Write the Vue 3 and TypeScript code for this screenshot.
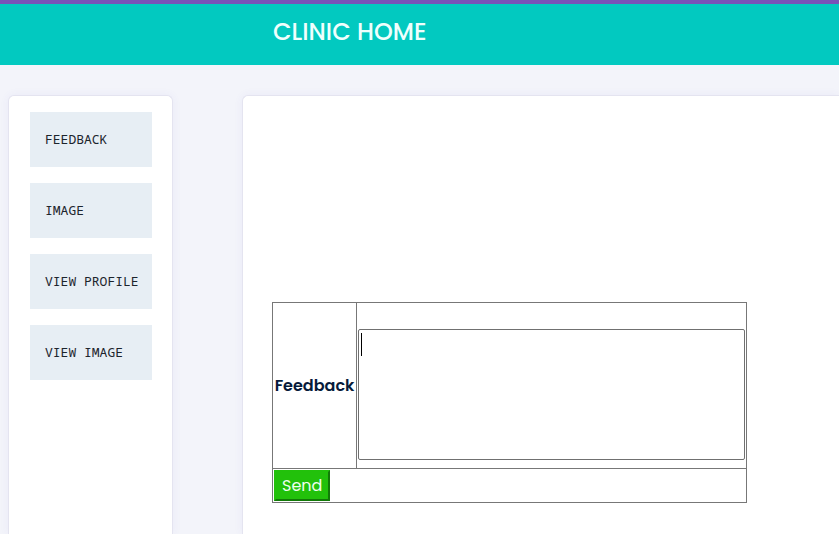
<script setup lang="ts">
import { ref } from 'vue'

interface MenuItem {
  label: string
  href: string
}

const menu: MenuItem[] = [
  { label: 'FEEDBACK', href: '#feedback' },
  { label: 'IMAGE', href: '#image' },
  { label: 'VIEW PROFILE', href: '#view-profile' },
  { label: 'VIEW IMAGE', href: '#view-image' },
]

const feedback = ref<string>('')

function send(): void {
  feedback.value = ''
}
</script>

<template>
  <div class="page">
    <header class="header">
      <h1 class="title">CLINIC HOME</h1>
    </header>
    <div class="body">
      <nav class="card sidebar">
        <a v-for="item in menu" :key="item.label" class="menu-link" :href="item.href">{{ item.label }}</a>
      </nav>
      <main class="card content">
        <form @submit.prevent="send">
          <table class="form-table">
            <tbody>
              <tr>
                <th scope="row"><label for="feedback">Feedback</label></th>
                <td class="field-cell">
                  <div class="field">
                    <textarea id="feedback" v-model="feedback"></textarea>
                    <span v-if="!feedback" class="caret" aria-hidden="true"></span>
                  </div>
                </td>
              </tr>
              <tr>
                <td colspan="2"><button class="send" type="submit">Send</button></td>
              </tr>
            </tbody>
          </table>
        </form>
      </main>
    </div>
  </div>
</template>

<style>
body {
  margin: 0;
  background: #f3f4fa;
}
</style>

<style scoped>
.page {
  display: flex;
  flex-direction: column;
  min-height: 100vh;
  box-sizing: border-box;
  color: #061a3a;
  font-family: Poppins, Inter, sans-serif;
  font-size: 16px;
}

.header {
  padding: 12px 30px 17px 273px;
  border-top: 4px solid #7952b8;
  background: #02c9c0;
}

.title {
  margin: 0;
  color: #effffd;
  font-size: 24px;
  font-weight: 500;
  line-height: 32px;
}

.body {
  display: flex;
  flex: 1;
  gap: 69px;
  padding: 30px 0 0 8px;
}

.card {
  box-sizing: border-box;
  border: 1px solid #e4e4f0;
  border-bottom: 0;
  background: #fff;
  box-shadow: 0 0 10px rgba(80, 70, 200, 0.06);
}

.sidebar {
  display: flex;
  flex: 0 0 165px;
  flex-direction: column;
  gap: 16px;
  min-width: 0;
  padding: 16px 20px 16px 21px;
  border-radius: 6px 6px 0 0;
}

.menu-link {
  padding: 0 12px 0 15px;
  background: #e7eef4;
  color: #1c242c;
  font-family: Consolas, "Noto Sans Mono", "DejaVu Sans Mono", monospace;
  font-size: 13px;
  line-height: 55px;
  text-decoration: none;
  white-space: nowrap;
}

.content {
  flex: 1;
  min-width: 0;
  padding: 206px 30px 31px 29px;
  border-right: 0;
  border-radius: 6px 0 0 0;
}

.form-table {
  border-collapse: collapse;
}

.form-table th,
.form-table td {
  padding: 1px;
  border: 1px solid #777;
}

.form-table th {
  min-width: 81px;
  font-weight: 600;
}

.form-table .field-cell {
  padding: 26px 1px 8px;
}

.field {
  position: relative;
}

.field textarea {
  display: block;
  box-sizing: border-box;
  width: 387px;
  height: 131px;
  padding: 2px;
  border: 1px solid #707070;
  border-radius: 2px;
  outline: 0;
  background: #fff;
  color: #061a3a;
  font: inherit;
  resize: none;
}

.caret {
  position: absolute;
  top: 4px;
  left: 3px;
  width: 1px;
  height: 23px;
  background: #000;
  pointer-events: none;
}

.field:focus-within .caret {
  display: none;
}

.send {
  display: block;
  padding: 1px 6px;
  border: 2px solid;
  border-color: #22c10b #127a08 #127a08 #22c10b;
  background: #22c10b;
  color: #effff0;
  font-family: inherit;
  font-size: 16px;
  line-height: 25px;
}
</style>
